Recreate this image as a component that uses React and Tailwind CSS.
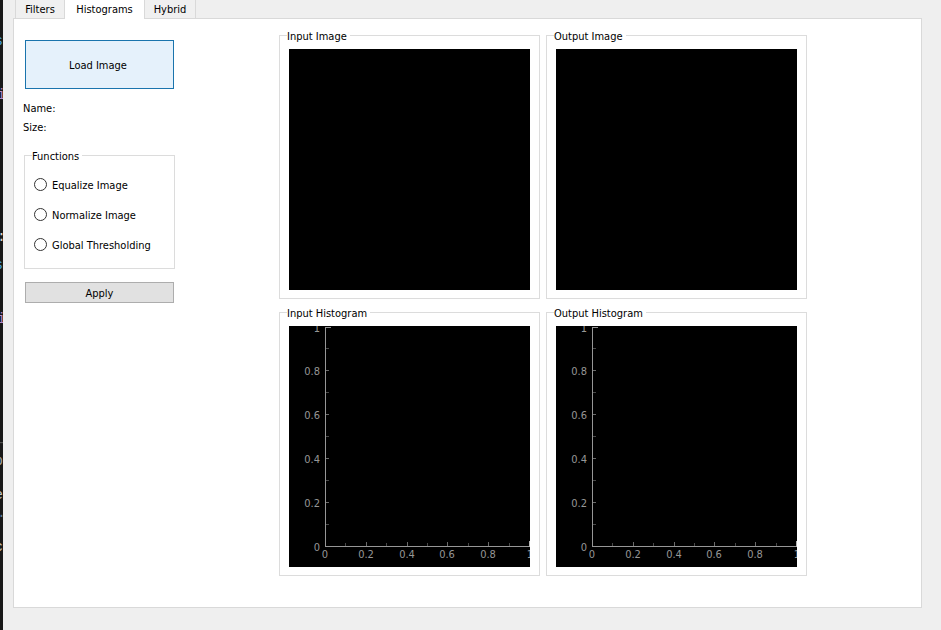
import React from "react";

const editorGlyphs = [
  { char: "s", style: "mt-[34px] self-end text-[#4aa3df]" },
  { char: "i", style: "mt-[40px] self-center text-[#b48ac8]" },
  { char: ":", style: "mt-[128px] self-center text-[#d4d4d4]" },
  { char: "s", style: "mt-[14px] self-end text-[#4aa3df]" },
  { char: "i", style: "mt-[40px] self-center text-[#b48ac8]" },
  { char: "-", style: "mt-[110px] self-center text-[#505050]" },
  { char: "p", style: "mt-[4px] self-end text-[#a8a8a8]" },
  { char: "e", style: "mt-[20px] self-end text-[#c4c4c4]" },
  { char: ".", style: "mt-[4px] self-center text-[#5a7a94]" },
  { char: "c", style: "mt-[20px] self-end text-[#d4c4b4]" },
];

const yTicks = [22, 44, 66, 88, 110, 132, 154, 176, 198];
const xTicks = [56, 77, 97, 118, 138, 158, 179, 199, 220];
const yLabels = [
  { text: "1", y: 1 },
  { text: "0.8", y: 44 },
  { text: "0.6", y: 88 },
  { text: "0.4", y: 132 },
  { text: "0.2", y: 176 },
  { text: "0", y: 220 },
];
const xLabels = [
  { text: "0", x: 36 },
  { text: "0.2", x: 77 },
  { text: "0.4", x: 118 },
  { text: "0.6", x: 158 },
  { text: "0.8", x: 199 },
  { text: "1", x: 241 },
];

function EditorStrip() {
  return (
    <div
      aria-hidden="true"
      className="flex w-[3px] shrink-0 flex-col overflow-hidden bg-[#181818] font-['Liberation_Mono',monospace] text-sm leading-[14px]"
    >
      {editorGlyphs.map((g, i) => (
        <span key={i} className={g.style}>
          {g.char}
        </span>
      ))}
    </div>
  );
}

function Tab({ label, selected, className }) {
  return (
    <button
      type="button"
      role="tab"
      aria-selected={selected}
      className={
        selected
          ? `relative -mb-px h-[19px] bg-white ${className}`
          : `h-[18px] border-r border-[#d9d9d9] bg-[#f0f0f0] pt-[2px] ${className}`
      }
    >
      {label}
    </button>
  );
}

function Group({ title, className, children }) {
  return (
    <fieldset className={`min-w-0 border border-[#dcdcdc] ${className}`}>
      <legend className="h-[13px] pr-[3px] leading-[15px]">{title}</legend>
      {children}
    </fieldset>
  );
}

function Histogram({ label }) {
  return (
    <svg
      role="img"
      aria-label={label}
      viewBox="0 0 241 241"
      className="block aspect-square w-full bg-black"
    >
      <g shapeRendering="crispEdges">
        {yTicks.map((y, i) => (
          <rect key={y} x="37" y={y} width="3" height="1" fill={i % 2 ? "#6a6a6a" : "#484848"} />
        ))}
        {xTicks.map((x, i) => (
          <rect
            key={x}
            x={x}
            y={i % 2 ? 216 : 217}
            width="1"
            height={i % 2 ? 4 : 3}
            fill={i % 2 ? "#6a6a6a" : "#484848"}
          />
        ))}
        <rect x="36" y="1" width="1" height="220" fill="#969696" />
        <rect x="36" y="220" width="205" height="1" fill="#969696" />
        <rect x="36" y="1" width="6" height="1" fill="#969696" />
        <rect x="240" y="215" width="1" height="6" fill="#b4b4b4" />
      </g>
      <g fill="#969696" fontSize="11">
        {yLabels.map((l) => (
          <text key={l.text} x="31" y={l.y + 5} textAnchor="end">
            {l.text}
          </text>
        ))}
        {xLabels.map((l) => (
          <text key={l.text} x={l.x} y="232" textAnchor="middle">
            {l.text}
          </text>
        ))}
      </g>
    </svg>
  );
}

function RadioOption({ label }) {
  return (
    <label className="flex h-[14px] items-start gap-[5px] leading-[15px]">
      <input
        type="radio"
        name="function"
        className="m-0 size-[13px] appearance-none rounded-full border border-[#333333] bg-white checked:border-4"
      />
      {label}
    </label>
  );
}

export default function App() {
  return (
    <div className="flex min-h-screen bg-[#efefef] font-['DejaVu_Sans_Condensed','DejaVu_Sans',sans-serif] text-[11px] leading-[14px] text-black">
      <EditorStrip />
      <div className="flex min-w-0 flex-1 flex-col pr-[19px] pb-[22px] pl-[10px]">
        <div role="tablist" className="flex items-start pl-[2px]">
          <Tab label="Filters" className="w-[50px] border-l" />
          <Tab label="Histograms" selected className="w-[79px]" />
          <Tab label="Hybrid" className="w-[52px] border-l" />
        </div>
        <main className="flex flex-1 items-start gap-[104px] border border-[#d9d9d9] bg-white pt-[10px] pl-[9px]">
          <div className="flex w-[152px] shrink-0 flex-col pt-[11px]">
            <button
              type="button"
              className="mr-px ml-[2px] h-[49px] border border-[#1a74ad] bg-[#e5f1fb] pt-[2px]"
            >
              <span className="pr-[3px]">Load Image</span>
            </button>
            <p className="mt-[13px]">Name:</p>
            <p className="mt-[5px]">Size:</p>
            <Group title="Functions" className="mt-[14px] ml-px pl-[7px]">
              <div className="flex flex-col gap-[16px] pt-[16px] pb-[16px] pl-[2px]">
                <RadioOption label="Equalize Image" />
                <RadioOption label="Normalize Image" />
                <RadioOption label="Global Thresholding" />
              </div>
            </Group>
            <button
              type="button"
              className="mt-[13px] mr-px ml-[2px] h-[21px] border border-[#adadad] bg-[#e1e1e1] pt-[2px]"
            >
              Apply
            </button>
          </div>
          <div className="grid grid-cols-[261px_261px] gap-x-[6px] gap-y-[7px]">
            <Group title="Input Image" className="px-[7px]">
              <div className="mx-[2px] mt-[7px] mb-[8px] aspect-square bg-black" />
            </Group>
            <Group title="Output Image" className="px-[7px]">
              <div className="mx-[2px] mt-[7px] mb-[8px] aspect-square bg-black" />
            </Group>
            <Group title="Input Histogram" className="px-[7px]">
              <div className="mx-[2px] mt-[7px] mb-[8px]">
                <Histogram label="Input Histogram" />
              </div>
            </Group>
            <Group title="Output Histogram" className="px-[7px]">
              <div className="mx-[2px] mt-[7px] mb-[8px]">
                <Histogram label="Output Histogram" />
              </div>
            </Group>
          </div>
        </main>
      </div>
    </div>
  );
}
